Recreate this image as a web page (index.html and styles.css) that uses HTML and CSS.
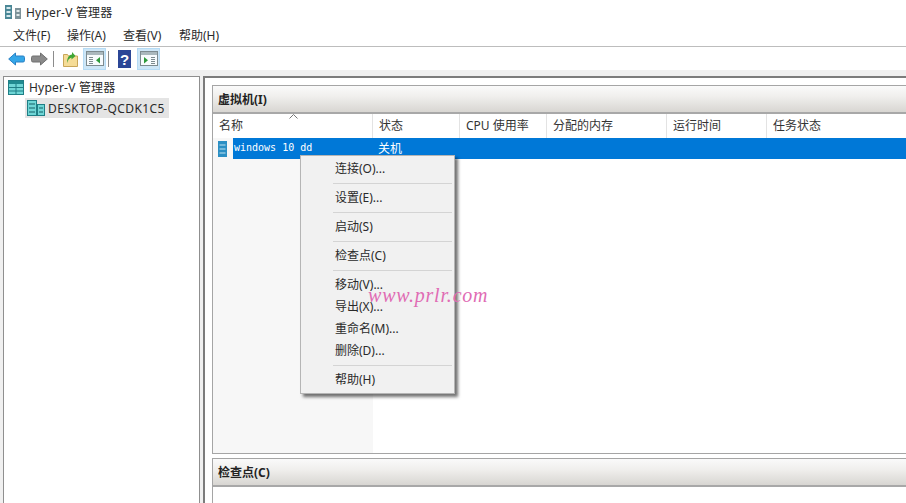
FILE: index.html
```html
<!DOCTYPE html>
<html lang="zh-CN">
<head>
<meta charset="utf-8">
<title>Hyper-V 管理器</title>
<link rel="stylesheet" href="styles.css">
</head>
<body>
<div class="window">
  <header class="titlebar">
    <svg class="title-icon" width="17" height="16" viewBox="0 0 17 16"><rect x="0" y="1" width="7" height="14" fill="#4a8796"/><rect x="1.500" y="3" width="4" height="2" fill="#d5e7ec"/><rect x="1.500" y="7" width="4" height="2" fill="#d5e7ec"/><rect x="1.500" y="11" width="4" height="2" fill="#d5e7ec"/><rect x="10" y="4" width="6" height="11" fill="#7d9299"/><rect x="11.500" y="6" width="3" height="2" fill="#dfe8ea"/><rect x="11.500" y="10" width="3" height="2" fill="#dfe8ea"/></svg>
    <span class="title-text">Hyper-V 管理器</span>
  </header>
  <nav class="menubar">
    <span>文件(F)</span><span>操作(A)</span><span>查看(V)</span><span>帮助(H)</span>
  </nav>
  <div class="toolbar">
    <svg class="tool back" width="17" height="14" viewBox="0 0 17 14"><path d="M.7 7 7.500 1v3h7.500a1.500 1.500 0 0 1 1.500 1.500v3A1.500 1.500 0 0 1 15 10H7.500v3z" fill="#35a7e8" stroke="#2a80c4"/></svg>
    <svg class="tool fwd" width="17" height="14" viewBox="0 0 17 14"><path d="M16.300 7 9.500 1v3H2A1.500 1.500 0 0 0 .5 5.500v3A1.500 1.500 0 0 0 2 10h7.500v3z" fill="#8a8a8a" stroke="#707070"/></svg>
    <i class="tool-sep"></i>
    <svg class="tool up" width="15" height="16" viewBox="0 0 15 16"><path d="M.5 3.500h4l1 1.500h9v10.500H.5z" fill="#f5dc97" stroke="#c9a659"/><path d="M4.500 12c0-3 2-5 4-5.500v2L12.500 5 9 1v2.500C5.500 4 3.500 8 4.500 12z" fill="#3fa535"/></svg>
    <span class="toggle"><svg width="18" height="15" viewBox="0 0 18 15"><rect x=".5" y=".5" width="17" height="14" fill="#f7fbfd" stroke="#7d8b90"/><rect x="1" y="1" width="16" height="3" fill="#aab8bd"/><path d="M3 6.500h4M3 8.500h4M3 10.500h4M3 12.500h4" stroke="#7d8b90"/><path d="M14 6v6.500L10 9.250z" fill="#2d9a3a"/></svg></span>
    <i class="tool-sep second"></i>
    <svg class="tool help" width="13" height="18" viewBox="0 0 13 18"><rect width="13" height="18" fill="#2b4696"/><text x="6.500" y="14.500" text-anchor="middle" class="help-q">?</text></svg>
    <span class="toggle"><svg width="18" height="15" viewBox="0 0 18 15"><rect x=".5" y=".5" width="17" height="14" fill="#f7fbfd" stroke="#7d8b90"/><rect x="1" y="1" width="16" height="3" fill="#aab8bd"/><path d="M11 6.500h4M11 8.500h4M11 10.500h4M11 12.500h4" stroke="#7d8b90"/><path d="M4 6v6.500l4-3.250z" fill="#2d9a3a"/></svg></span>
  </div>
  <main class="workspace">
    <aside class="tree">
      <div class="tree-row">
        <svg width="16" height="15" viewBox="0 0 16 15"><rect x=".5" y=".5" width="15" height="14" fill="#6fd6d6" stroke="#1f7f86"/><rect x="1" y="1" width="14" height="3" fill="#1f8a90"/><path d="M1 7.500h14M1 11h14M8 4v10" stroke="#1f7f86"/></svg>
        <span class="root-label">Hyper-V 管理器</span>
      </div>
      <div class="tree-row child">
        <svg width="18" height="16" viewBox="0 0 18 16"><rect x=".5" y=".5" width="9" height="15" fill="#6fd6d6" stroke="#1f7f86"/><rect x="10.500" y="4.500" width="7" height="11" fill="#6fd6d6" stroke="#1f7f86"/><path d="M2 4h6M2 8h6M2 12h6M12 8h4M12 12h4" stroke="#155f66"/></svg>
        <span class="tree-sel">DESKTOP-QCDK1C5</span>
      </div>
    </aside>
    <section class="content">
      <div class="panel vm-panel">
        <h2 class="panel-head">虚拟机(I)</h2>
        <div class="columns">
          <span class="col c-name">名称<svg class="sort" width="9" height="5" viewBox="0 0 9 5"><path d="M.5 4.500 4.500.5l4 4" fill="none" stroke="#777"/></svg></span>
          <span class="col c-state">状态</span>
          <span class="col c-cpu">CPU 使用率</span>
          <span class="col c-mem">分配的内存</span>
          <span class="col c-time">运行时间</span>
          <span class="col c-task">任务状态</span>
        </div>
        <div class="rows">
          <div class="shade"></div>
          <div class="vm-row">
            <svg class="vm-icon" width="9" height="16" viewBox="0 0 9 16"><rect width="9" height="16" fill="#2b8fc4"/><path d="M1.500 4h6M1.500 8h6M1.500 12h6" stroke="#bfe3f2"/></svg>
            <div class="vm-sel"><span class="vm-name">windows 10 dd</span><span class="vm-state">关机</span></div>
          </div>
        </div>
      </div>
      <div class="panel cp-panel">
        <h2 class="panel-head">检查点(C)</h2>
      </div>
    </section>
  </main>
  <ul class="ctx">
    <li>连接(O)...</li><li class="sep"></li>
    <li>设置(E)...</li><li class="sep"></li>
    <li>启动(S)</li><li class="sep"></li>
    <li>检查点(C)</li><li class="sep"></li>
    <li>移动(V)...</li><li>导出(X)...</li><li>重命名(M)...</li><li>删除(D)...</li><li class="sep"></li>
    <li>帮助(H)</li>
  </ul>
  <div class="watermark">www.prlr.com</div>
</div>
</body>
</html>
```
FILE: styles.css
```css
* { box-sizing: border-box; }
html, body { margin: 0; height: 100%; }
body {
  font-family: "Noto Sans", "Noto Sans CJK SC", sans-serif;
  font-size: 12px;
  color: #2a2a2a;
  background: #fff;
  overflow: hidden;
}
.window { position: relative; width: 906px; height: 503px; overflow: hidden; display: flex; flex-direction: column; }
.titlebar { height: 23px; display: flex; align-items: center; gap: 4px; padding: 0 0 0 5px; }
.title-text { letter-spacing: .2px; }
.menubar { height: 24px; display: grid; grid-template-columns: 54px 56px 56px 60px; align-items: center; padding: 0 0 0 13px; border-bottom: 1px solid #bdbdbd; }
.toolbar { height: 23px; display: flex; align-items: center; padding-left: 8px; background: #fff; }
.tool { flex: none; }
.back { margin-right: 6px; }
.tool-sep { width: 1px; height: 16px; background: #8c8c8c; margin: 0 9px 0 5px; }
.tool-sep.second { margin: 0 9px 0 2px; }
.up { margin-right: 5px; }
.help { margin-right: 6px; }
.help-q { font: bold 15px "Liberation Sans", sans-serif; fill: #fff; }
.toggle { width: 23px; height: 22px; background: #cde6f7; border: 1px solid #b5dbf5; display: flex; align-items: center; justify-content: center; }
.workspace { flex: 1; min-height: 0; display: flex; background: #f0f0f0; padding: 6px 0 0 3px; gap: 3px; }
.tree { width: 197px; background: #fff; border: 1px solid #8f8f8f; border-bottom: 0; padding: 0 0 0 4px; }
.tree-row { display: flex; align-items: center; gap: 5px; height: 20px; white-space: nowrap; }
.root-label { letter-spacing: .2px; }
.tree-row.child { margin: 1px 0 0 17px; width: 144px; padding-left: 2px; gap: 3px; background: #e4e4e4; }
.tree-sel { letter-spacing: .4px; }
.content { flex: 1; min-width: 0; background: #fff; border-style: solid; border-color: #7c7c7c; border-width: 2px 0 0 2px; padding: 7px 0 0 7px; display: flex; flex-direction: column; gap: 4px; }
.panel { border: 1px solid #a5a5a5; border-right: 0; display: flex; flex-direction: column; background: #fff; }
.vm-panel { height: 369px; flex: none; }
.cp-panel { flex: 1; border-bottom: 0; }
.panel-head { margin: 0; height: 28px; line-height: 27px; padding-left: 5px; font-size: 12px; font-weight: 700; color: #222; background: linear-gradient(#fafafa, #f0efed 40%, #d8d6d2); border-bottom: 2px solid #a8a8a8; flex: none; }
.columns { height: 24px; display: flex; flex: none; color: #333; position: relative; }
.col { display: flex; align-items: center; padding: 0 0 2px 6px; border-right: 1px solid #e3e3e3; height: 24px; white-space: nowrap; flex: none; }
.c-name { width: 160px; position: relative; }
.c-state { width: 87px; }
.c-cpu { width: 87px; }
.c-mem { width: 120px; }
.c-time { width: 100px; }
.c-task { flex: 1; border-right: 0; }
.sort { position: absolute; left: 76px; top: 0; }
.rows { flex: 1; position: relative; }
.shade { position: absolute; left: 0; top: 0; width: 160px; bottom: 0; background: #f7f7f7; }
.vm-row { position: relative; display: flex; align-items: center; height: 21px; padding-left: 5px; }
.vm-icon { flex: none; margin-right: 6px; }
.vm-sel { flex: 1; height: 21px; background: #0078d7; color: #fff; display: flex; align-items: center; padding: 0 0 2px 1px; }
.vm-name { font: 10px "DejaVu Sans Mono", "Liberation Mono", monospace; width: 144px; }
.vm-state { font-size: 12px; }
.ctx { position: absolute; left: 300px; top: 155px; width: 155px; margin: 0; padding: 2px 1px 2px; list-style: none; background: #f1f1f1; border: 1px solid #b5b5b5; box-shadow: 3px 3px 3px rgba(0, 0, 0, .55); color: #2a2a2a; }
.ctx li { height: 22px; line-height: 21px; padding-left: 33px; }
.ctx li.sep { height: 1px; margin: 3px 1px 3px 31px; padding: 0; background: #d4d4d4; }
.watermark { position: absolute; left: 368px; top: 282px; font: italic 20px/26px "Liberation Serif", serif; color: #e06cb4; letter-spacing: .8px; white-space: nowrap; }
```
